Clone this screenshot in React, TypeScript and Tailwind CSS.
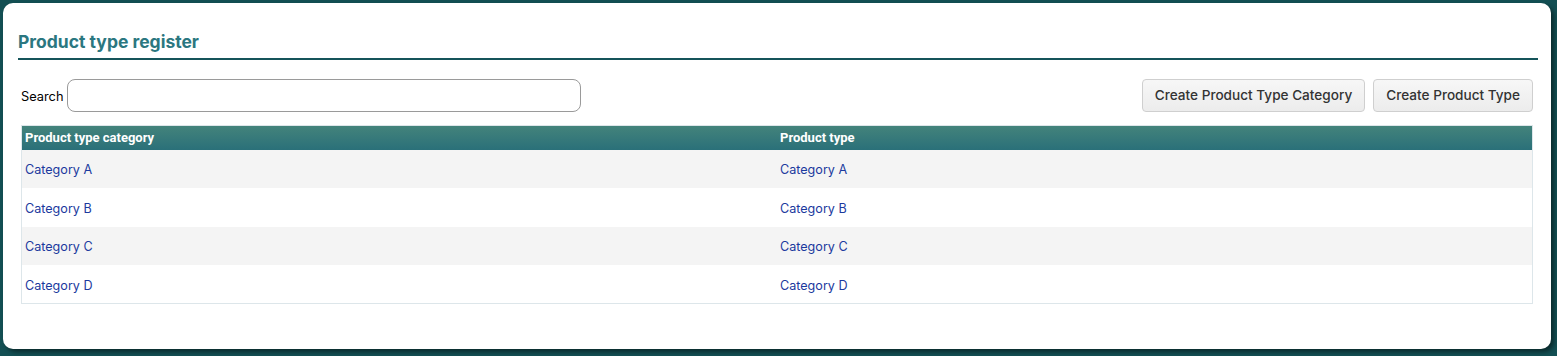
import { useState } from 'react';

const rows = [
  { category: 'Category A', type: 'Category A' },
  { category: 'Category B', type: 'Category B' },
  { category: 'Category C', type: 'Category C' },
  { category: 'Category D', type: 'Category D' },
];

export default function App() {
  const [search, setSearch] = useState('');

  return (
    <main className="min-h-[356px] w-full bg-[#134f53] pt-[3px] pl-[3px] pr-[6px] pb-[7px] font-[Inter,sans-serif]">
      <div className="h-[346px] rounded-[10px] bg-white pl-[15px] pr-[13px] pt-[27px] shadow-[3px_3px_4px_rgba(0,0,0,0.45)]">
        <h1 className="border-b-2 border-[#15545a] pb-1 text-[17.5px] leading-6 font-bold text-[#2b7780]">
          Product type register
        </h1>
        <div className="pl-[3px] pr-[5px]">
          <div className="mt-[19px] flex items-center justify-between">
            <label className="flex items-center gap-1 pt-[2px] text-[12.8px] text-black">
              Search
              <input
                value={search}
                onChange={(e) => setSearch(e.target.value)}
                className="-mt-[2px] h-[33px] w-[514px] rounded-[8px] border border-[#9a9a9a] px-2 outline-none"
              />
            </label>
            <div className="flex gap-2">
              <button className="h-[33px] rounded-[4px] border border-[#cfcfcf] bg-gradient-to-b from-[#f7f7f7] to-[#ececec] px-3 text-[13.6px] font-medium text-[#333]">
                Create Product Type Category
              </button>
              <button className="h-[33px] rounded-[4px] border border-[#cfcfcf] bg-gradient-to-b from-[#f7f7f7] to-[#ececec] px-3 text-[13.6px] font-medium text-[#333]">
                Create Product Type
              </button>
            </div>
          </div>
          <table className="mt-[13px] w-full border border-[#dde6ea] border-collapse">
            <thead>
              <tr className="h-6 bg-gradient-to-b from-[#43837b] to-[#2a7079] text-left text-[13px] text-white font-[Roboto,sans-serif]">
                <th className="w-1/2 pl-[3px] font-bold">Product type category</th>
                <th className="w-1/2 pl-[3px] font-bold">Product type</th>
              </tr>
            </thead>
            <tbody>
              {rows.map((row, index) => (
                <tr
                  key={index}
                  className={index % 2 === 0 ? 'h-[38.5px] bg-[#f4f4f4]' : 'h-[38.5px] bg-white'}
                >
                  <td className="pl-[3px] pt-1 text-[12.6px] text-[#1b3a9e]">{row.category}</td>
                  <td className="pl-[3px] pt-1 text-[12.6px] text-[#1b3a9e]">{row.type}</td>
                </tr>
              ))}
            </tbody>
          </table>
        </div>
      </div>
    </main>
  );
}
